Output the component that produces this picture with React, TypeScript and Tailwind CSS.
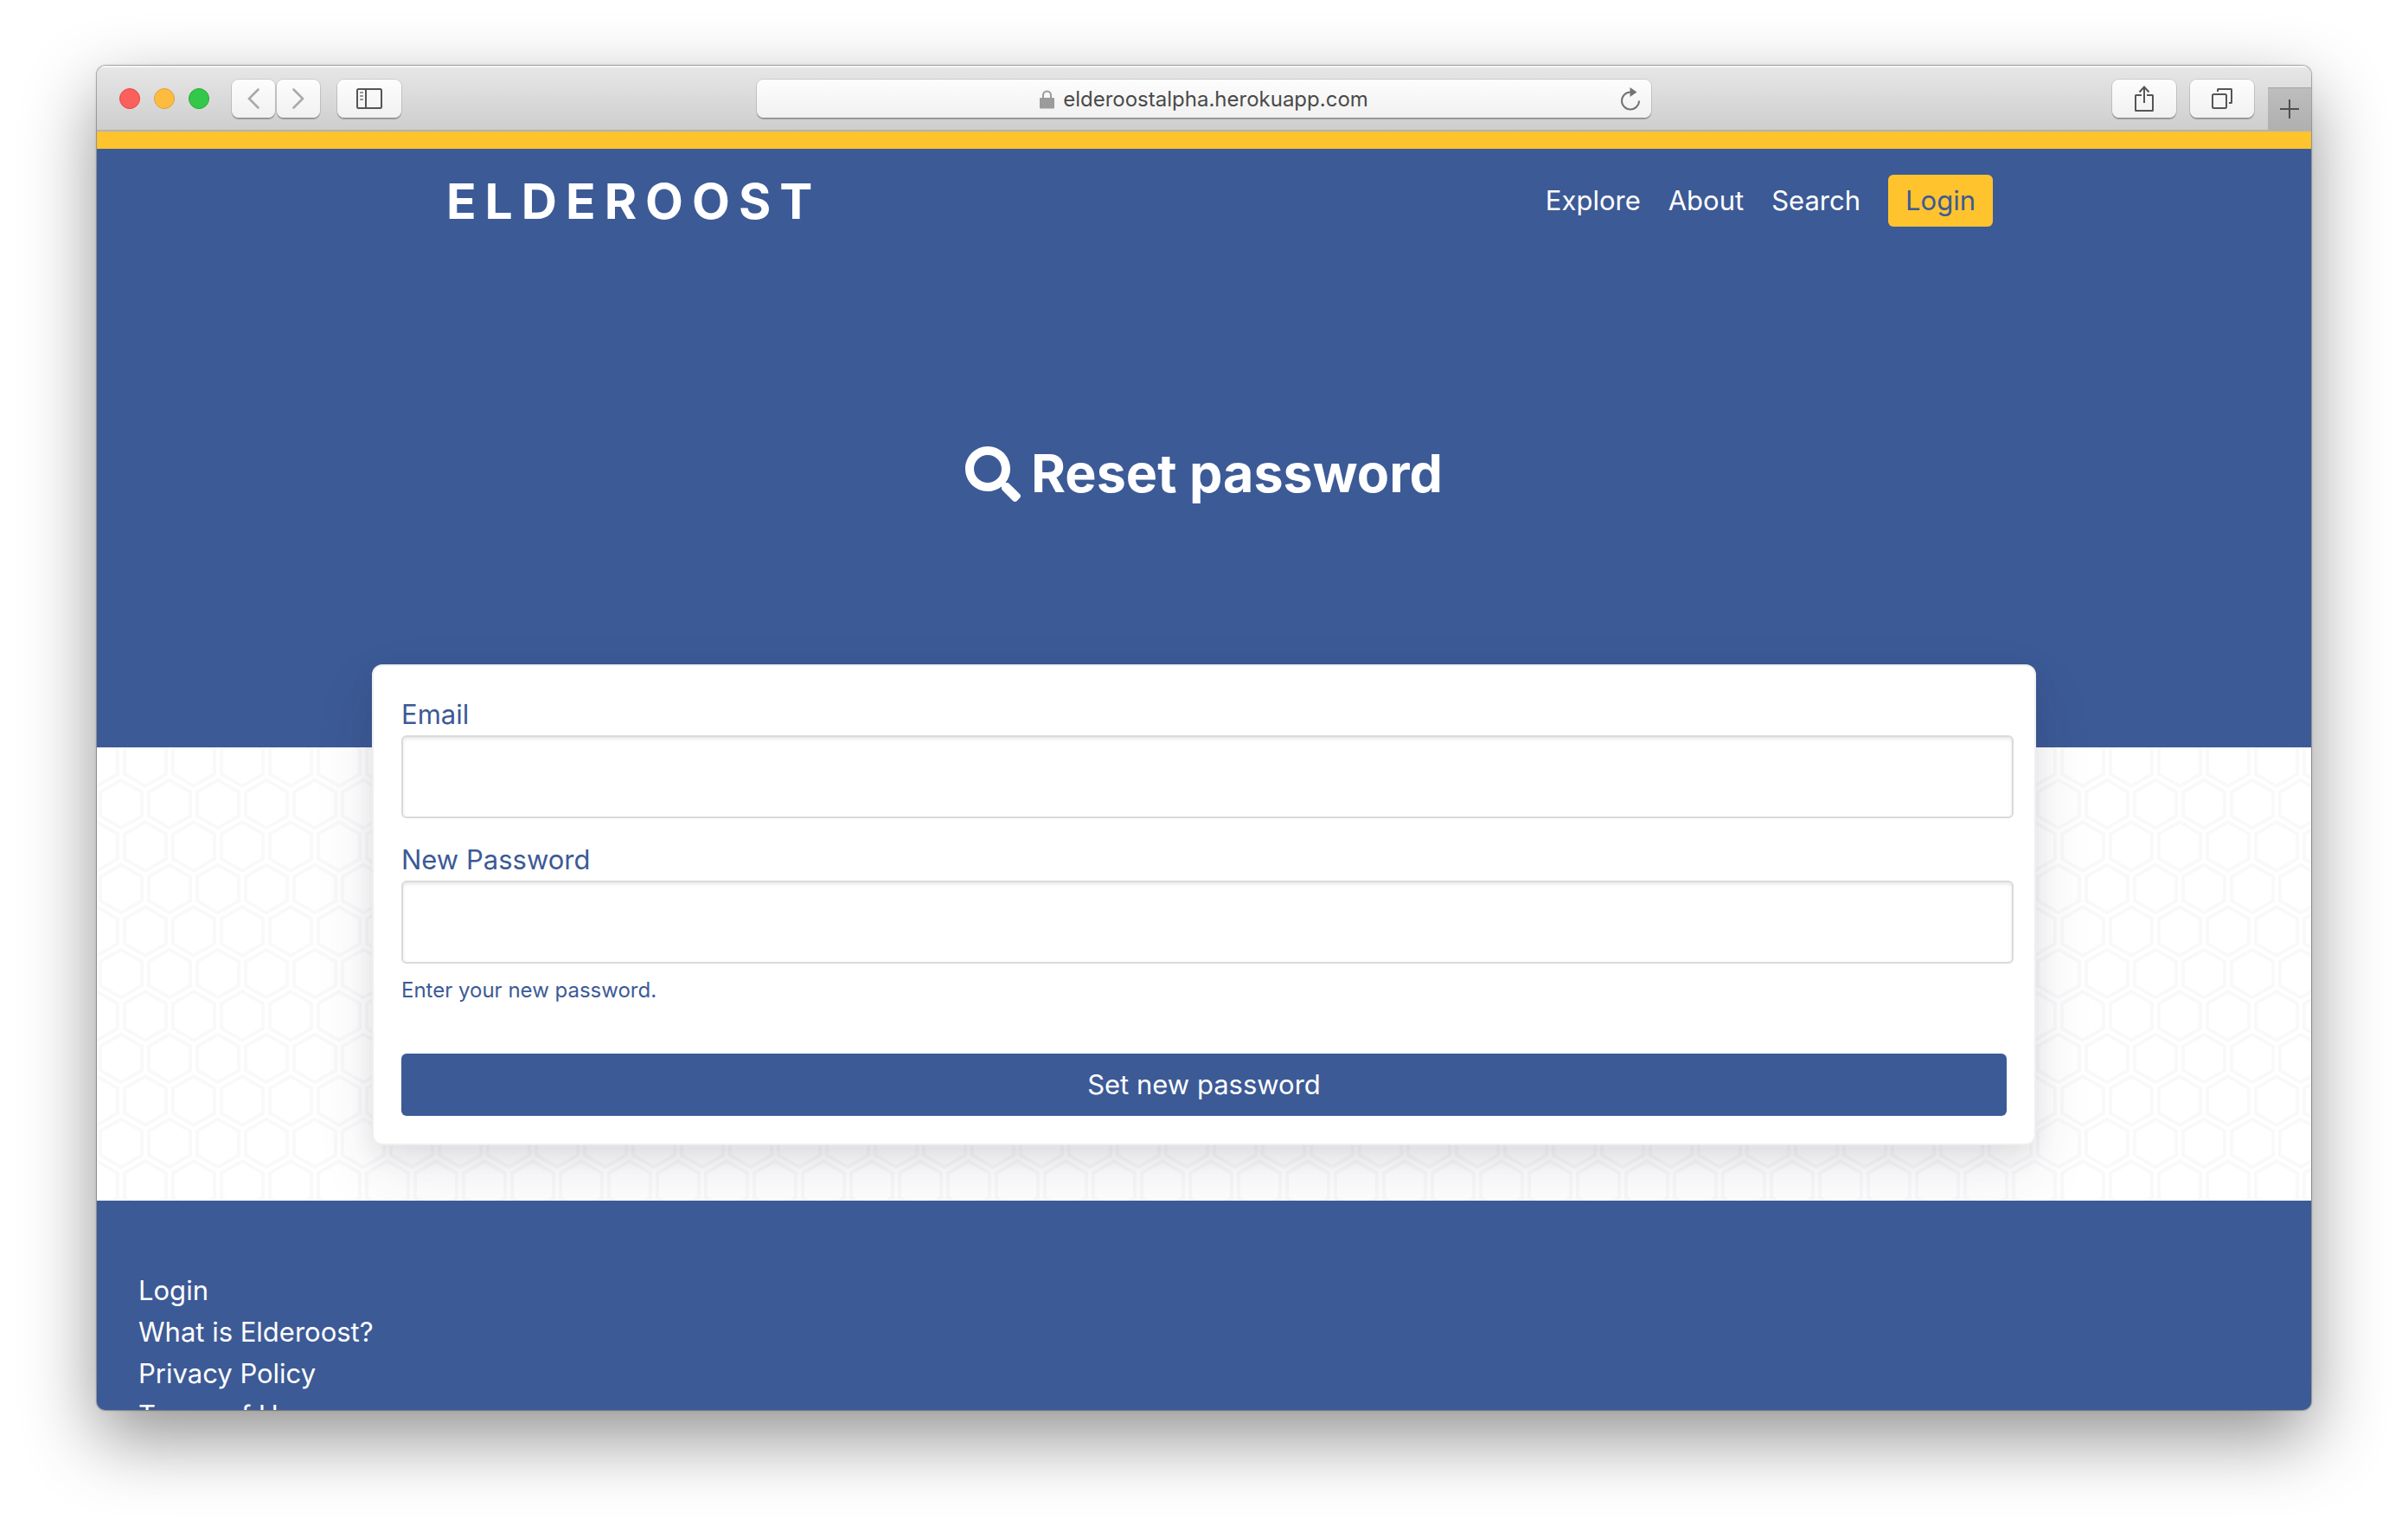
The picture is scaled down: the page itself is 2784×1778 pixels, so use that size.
import { FaSearch } from "react-icons/fa";

const toolbarButton =
  "flex h-11 items-center justify-center rounded-lg bg-linear-to-b from-[#fdfdfd] to-[#f1f1f1] shadow-[0_0_0_1px_rgba(0,0,0,0.1),0_2px_1px_rgba(0,0,0,0.25)]";

function TitleBar() {
  return (
    <div className="grid h-[76px] shrink-0 grid-cols-[1fr_1034px_1fr] items-center border-b-2 border-[#b0b2b6] bg-linear-to-b from-[#e7e7e7] to-[#cecece] pt-0.5 shadow-[inset_0_2px_0_#f5f5f5]">
      <div className="flex items-center pl-[26px]">
        <div className="flex gap-4">
          <button aria-label="Close" className="size-6 rounded-full border border-[#e2473f] bg-[#fc605c]" />
          <button aria-label="Minimise" className="size-6 rounded-full border border-[#dfa033] bg-[#fdbc40]" />
          <button aria-label="Zoom" className="size-6 rounded-full border border-[#27a934] bg-[#34c84a]" />
        </div>
        <div className="ml-[26px] flex gap-0.5">
          <button aria-label="Back" className={toolbarButton + " w-[50px]"}>
            <svg width="14" height="24" viewBox="0 0 14 24" fill="none" stroke="#a9a9a9" strokeWidth="2.6" strokeLinecap="round">
              <path d="M12.500 1.500 2 12l10.500 10.500" />
            </svg>
          </button>
          <button aria-label="Forward" className={toolbarButton + " w-[50px]"}>
            <svg width="14" height="24" viewBox="0 0 14 24" fill="none" stroke="#a9a9a9" strokeWidth="2.6" strokeLinecap="round">
              <path d="M1.500 1.500 12 12 1.500 22.500" />
            </svg>
          </button>
        </div>
        <button aria-label="Show sidebar" className={toolbarButton + " ml-5 w-[74px]"}>
          <svg width="30" height="24" viewBox="0 0 30 24" fill="none" stroke="#555" strokeWidth="2">
            <rect x="1" y="1" width="28" height="22" rx="1.500" />
            <path d="M11 1v22" />
            <path d="M4 5h4M4 9h4M4 13h4" stroke="#999" />
          </svg>
        </button>
      </div>

      <div className="flex h-11 items-center rounded-lg bg-linear-to-b from-[#fdfdfd] to-[#f1f1f1] pt-0.5 pr-3 pl-9 shadow-[0_0_0_1px_rgba(0,0,0,0.1),0_2px_1px_rgba(0,0,0,0.25)]">
        <label className="flex flex-1 items-center justify-center gap-2.5">
          <svg width="17" height="22" viewBox="0 0 17 22" aria-label="Secure">
            <path d="M4 10V6a4.500 4.500 0 0 1 9 0v4" fill="none" stroke="#9b9b9b" strokeWidth="2" />
            <rect x="0" y="9" width="17" height="12.500" rx="1" fill="#9b9b9b" />
          </svg>
          <input
            aria-label="Address"
            type="text"
            defaultValue="elderoostalpha.herokuapp.com"
            className="field-sizing-content bg-transparent text-2xl text-[#4a4a4a] outline-none"
          />
        </label>
        <button aria-label="Reload">
          <svg width="24" height="28" viewBox="0 0 24 28">
            <path d="M12 5.500A10 10 0 1 0 22 15.500" fill="none" stroke="#737373" strokeWidth="2" />
            <path d="M11.500 0 19.500 5.500 11.500 11z" fill="#737373" />
          </svg>
        </button>
      </div>

      <div className="flex h-full items-center justify-end">
        <button aria-label="Share" className={toolbarButton + " w-[74px]"}>
          <svg width="22" height="30" viewBox="0 0 22 30" fill="none" stroke="#555" strokeWidth="2">
            <path d="M8 11H1.500q-.5 0-.5.500v17q0 .5.500.5h19q.5 0 .5-.5v-17q0-.5-.5-.500H14" />
            <path d="M11 20V1.500M5.500 7.500 11 1.500l5.500 6" />
          </svg>
        </button>
        <button aria-label="Show tabs" className={toolbarButton + " ml-4 w-[74px]"}>
          <svg width="24" height="24" viewBox="0 0 24 24" fill="none" stroke="#555" strokeWidth="2">
            <rect x="1" y="7" width="16" height="16" rx="1.500" />
            <path d="M7 4V1.500q0-.5.500-.5h15q.5 0 .5.500v15q0 .5-.5.500H20" />
          </svg>
        </button>
        <button
          aria-label="New tab"
          className="ml-4 flex h-[49px] w-[50px] items-center justify-center self-end border-t border-[#a5a5a5] bg-linear-to-b from-[#bdbdbd] to-[#b0b0b0]"
        >
          <svg width="22" height="22" viewBox="0 0 22 22" stroke="#4f4f4f" strokeWidth="2">
            <path d="M11 0v22M0 11h22" />
          </svg>
        </button>
      </div>
    </div>
  );
}

function HexPattern() {
  return (
    <svg className="absolute inset-0 size-full" aria-hidden="true">
      <defs>
        <pattern id="hexagons" width="28" height="49" patternUnits="userSpaceOnUse" patternTransform="translate(0 17) scale(2)">
          <path
            fill="#32325d"
            fillOpacity="0.03"
            fillRule="evenodd"
            d="M13.99 9.25l13 7.5v15l-13 7.5L1 31.75v-15l12.99-7.5zM3 17.9v12.7l10.99 6.34 11-6.35V17.9l-11-6.34L3 17.9zM0 15l12.98-7.5V0h-2v6.35L0 12.69v2.3zm0 18.5L12.98 41v8h-2v-6.85L0 35.81v-2.3zM15 0v7.5L27.99 15H28v-2.31h-.01L17 6.35V0h-2zm0 49v-8l12.99-7.5H28v2.31h-.01L17 42.15V49h-2z"
          />
        </pattern>
      </defs>
      <rect width="100%" height="100%" fill="url(#hexagons)" />
    </svg>
  );
}

const field =
  "block h-24 w-[calc(100%+8px)] rounded-md border-2 border-[#dadada] bg-white px-6 text-[#3c5a96] shadow-[inset_0_2px_4px_rgba(0,0,0,0.1)] outline-none";

export default function App() {
  return (
    <div className="flex h-screen flex-col overflow-hidden bg-white px-28 pt-[76px] pb-[148px] font-['Inter',sans-serif]">
      <div className="flex min-h-0 flex-1 flex-col overflow-hidden rounded-[10px] shadow-[0_0_0_1px_rgba(0,0,0,0.2),0_0_3px_rgba(0,0,0,0.3),0_32px_84px_rgba(0,0,0,0.43)]">
        <TitleBar />
        <div className="min-h-0 flex-1 overflow-hidden bg-[#3c5a96] text-[31px] leading-[48px]">
          <div className="border-t-[20px] border-[#ffc32e] bg-[#3c5a96] text-white">
            <header className="mx-auto flex h-[120px] max-w-[1824px] items-center justify-between">
              <a href="#" className="pt-0.5 pl-9 text-[57px] leading-[60px] font-bold tracking-[10px]">
                ELDEROOST
              </a>
              <nav className="flex items-center gap-8">
                <a href="#">Explore</a>
                <a href="#">About</a>
                <a href="#">Search</a>
                <a href="#" className="rounded-md bg-[#ffc32e] px-5 py-1.5 text-[#3c5a96]">
                  Login
                </a>
              </nav>
            </header>
            <h1 className="flex items-center justify-center gap-3 pt-[217px] pb-[278px] text-[61px] leading-[77px] font-bold">
              <FaSearch className="size-16" />
              Reset password
            </h1>
          </div>

          <main className="relative flow-root bg-white pb-16">
            <HexPattern />
            <form
              className="relative mx-auto -mt-24 max-w-[1924px] rounded-xl border-2 border-[#efefef] bg-white p-8 text-[#3c5a96] shadow-[0_30px_70px_rgba(50,50,93,0.1),0_10px_30px_rgba(0,0,0,0.07)]"
              onSubmit={(e) => e.preventDefault()}
            >
              <label htmlFor="email" className="block">
                Email
              </label>
              <input id="email" type="email" className={field} />
              <label htmlFor="password" className="mt-6 block">
                New Password
              </label>
              <input id="password" type="password" aria-describedby="password-help" className={field} />
              <p id="password-help" className="mt-3 text-2xl leading-[38px]">
                Enter your new password.
              </p>
              <button type="submit" className="mt-[54px] block h-[72px] w-full rounded-md bg-[#3c5a96] text-white">
                Set new password
              </button>
            </form>
          </main>

          <footer className="relative bg-[#3c5a96] px-12 pt-20 text-white">
            <ul>
              <li><a href="#">Login</a></li>
              <li><a href="#">What is Elderoost?</a></li>
              <li><a href="#">Privacy Policy</a></li>
              <li><a href="#">Terms of Use</a></li>
            </ul>
          </footer>
        </div>
      </div>
    </div>
  );
}
